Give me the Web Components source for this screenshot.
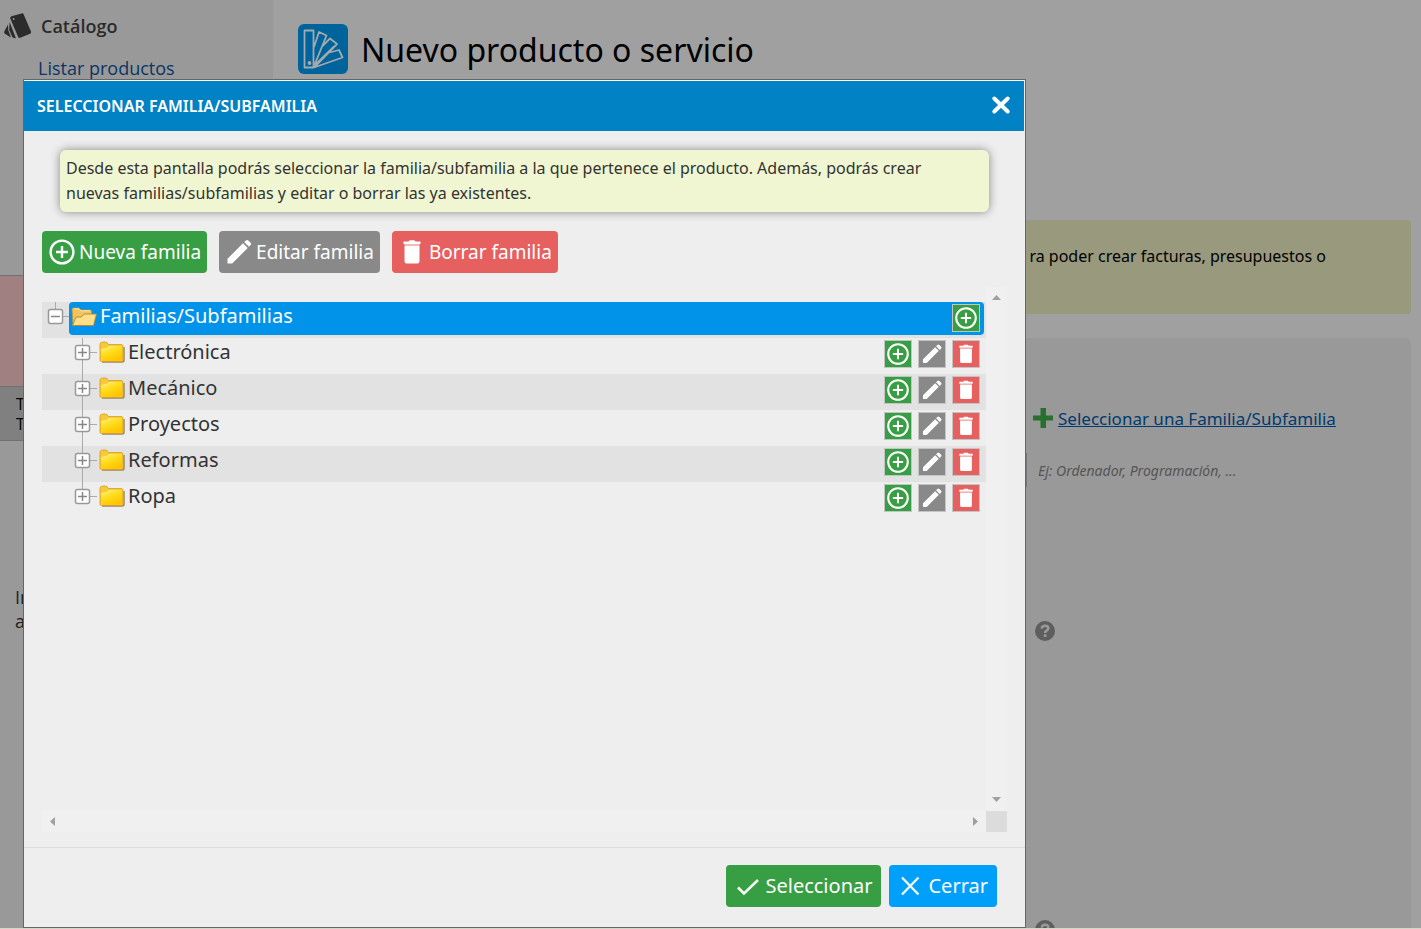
<!DOCTYPE html>
<html lang="es">
<head>
<meta charset="utf-8">
<title>Nuevo producto o servicio</title>
<style>
html,body{margin:0;height:100%}
body{font-family:"Noto Sans","Open Sans",sans-serif;color:#222;overflow:hidden;background:#a0a0a0}
</style>
</head>
<body>
<app-shell>
  <side-nav slot="nav"></side-nav>
  <product-page slot="main"></product-page>
  <family-dialog slot="dialog" heading="SELECCIONAR FAMILIA/SUBFAMILIA">
    <info-tip>Desde esta pantalla podrás seleccionar la familia/subfamilia a la que pertenece el producto. Además, podrás crear nuevas familias/subfamilias y editar o borrar las ya existentes.</info-tip>
    <tool-row>
      <action-button icon="add" color="#389e43">Nueva familia</action-button>
      <action-button icon="edit" color="#898989">Editar familia</action-button>
      <action-button icon="trash" color="#e66060">Borrar familia</action-button>
    </tool-row>
    <scroll-box>
      <tree-item label="Familias/Subfamilias" root></tree-item>
      <tree-item label="Electrónica"></tree-item>
      <tree-item label="Mecánico" shade></tree-item>
      <tree-item label="Proyectos"></tree-item>
      <tree-item label="Reformas" shade></tree-item>
      <tree-item label="Ropa" last></tree-item>
    </scroll-box>
    <action-button slot="footer" large icon="check" color="#389e43">Seleccionar</action-button>
    <action-button slot="footer" large icon="cross" color="#009ff9">Cerrar</action-button>
  </family-dialog>
</app-shell>
<script>
const ICONS={
add:'<svg viewBox="0 0 28 28"><g fill="none" stroke="#fff" stroke-width="2.4"><circle cx="14" cy="14" r="11.4"/><path d="M14 8v12M8 14h12"/></g></svg>',
edit:'<svg viewBox="0 0 28 28"><path fill="#fff" d="M2.5 20.8 18 5.3l4.700 4.700L7.200 25.500H2.500zM19.200 4.100l1.700-1.700q1.200-1 2.400 0l2.300 2.300q1 1.200 0 2.400l-1.700 1.700z"/></svg>',
trash:'<svg viewBox="0 0 28 28"><path fill="#fff" d="M6.500 7.500h15v16q0 2-2 2h-11q-2 0-2-2zM5.500 3.500h5l1.200-1.300h4.600l1.200 1.300h5v2.500h-17z"/><path fill="#f5bcbc" d="M6.500 6h15v1.500h-15z"/></svg>',
check:'<svg viewBox="0 0 28 28"><path fill="none" stroke="#f4faf4" stroke-width="2.600" d="M4 15.500l6 6L24 8"/></svg>',
cross:'<svg viewBox="0 0 28 28"><path fill="none" stroke="#eef8ff" stroke-width="2.500" d="M5 5.500l16.500 17M21.500 5.500l-16.500 17"/></svg>',
close:'<svg viewBox="0 0 20 20"><path fill="none" stroke="#fff" stroke-width="4" stroke-linecap="round" d="M3.300 3.500l13.400 13M16.700 3.500l-13.400 13"/></svg>',
plus:'<svg viewBox="0 0 20 20"><path fill="#28702e" d="M7.500 0h5.500v7.500H20v5h-7V20H7.500v-7.500H0v-5h7.500z"/></svg>',
help:'<svg viewBox="0 0 20 20"><circle cx="10" cy="10" r="10" fill="#5e5e5e"/><path fill="none" stroke="#999" stroke-width="2.600" d="M6.700 7.600q.3-2.900 3.400-2.900 3.200 0 3.200 2.500 0 1.500-1.700 2.500-1.500.9-1.500 2.300"/><path fill="#999" d="M8.700 13.300h2.800v2.600H8.700z"/></svg>',
catalog:'<svg viewBox="0 0 28 26"><g fill="#2b2b2b"><path d="M6.300 5.500q-.4-1.600 1.200-2.300L17.500.4q1.600-.5 2.200 1l7.300 17.200q.5 1.500-.9 2.100l-9.800 4.100q-1.500.5-2.100-.9z"/><path d="M5.600 9l6.300 16.200-1.600-.1q-1.500-.2-2.200-1.700L5.200 17zM4 11.500l.3 5.700 2.700 7.300-5.700-3.400Q-.4 20 .4 18.200z"/></g><circle cx="9.600" cy="6" r=".9" fill="#999"/></svg>',
swatch:'<svg viewBox="0 0 50 50"><rect width="50" height="50" rx="6" fill="#00649c"/><g fill="none" stroke="#a3a9ad" stroke-width="1.800" stroke-linejoin="round"><path d="M6.500 6.500h9v37h-9zM16 23L21 8l7.500 3.500L16.500 41M24 22.500l8-8 7 5.500L16.500 43M31.500 28.500l9.500-2.500 3.500 7.500L16 43.500M36 22.500L17 41"/><circle cx="11.500" cy="39" r="1"/></g></svg>',
folder:'<svg viewBox="0 0 26 24"><defs><linearGradient id="f" x2=".6" y2="1"><stop stop-color="#fff3a0"/><stop offset=".45" stop-color="#ffdf20"/><stop offset="1" stop-color="#ffc400"/></linearGradient></defs><path d="M3 21h20.500q1.500 0 1.500-1.500V6" fill="none" stroke="#9a8a60" stroke-width="1.500"/><path d="M1 19V3.500q0-2 1.500-2.200Q6 .5 8 1.500L9.500 3.500H22q2 0 2 2V19q0 1.500-1.500 1.500H2.500Q1 20.500 1 19z" fill="#f6c83a" stroke="#d99a14" stroke-width=".8"/><path d="M2 19V9q0-1 1-1.300L8 6.500 10 5h13v14.600H2.800z" fill="url(#f)"/></svg>',
open:'<svg viewBox="0 0 26 24"><path d="M2 20L1 4q0-1 1-1h6l2 2h9.500q1 0 1 1v14z" fill="#f2c45c" stroke="#c48e30" stroke-width=".8"/><path d="M1.500 20.500L5 12h5.500l2.500-3h12.500l-3 11.500z" fill="#ffdf8c" stroke="#b9852e" stroke-width=".9"/><path d="M3 3.800h5l2 2h9" fill="none" stroke="#ffe9ae"/></svg>',
up:'<svg viewBox="0 0 21 21"><path d="M6 13h9l-4.500-5z" fill="#a0a0a0"/></svg>',
down:'<svg viewBox="0 0 21 21"><path d="M6 7h9l-4.500 5z" fill="#a0a0a0"/></svg>',
left:'<svg viewBox="0 0 21 21"><path d="M13 6v9l-5-4.500z" fill="#a0a0a0"/></svg>',
right:'<svg viewBox="0 0 21 21"><path d="M8 6v9l5-4.500z" fill="#a0a0a0"/></svg>'
};
function define(tag,render){
  customElements.define(tag,class extends HTMLElement{
    connectedCallback(){
      if(this.shadowRoot)return;
      this.attachShadow({mode:'open'}).innerHTML=render(this);
    }
  });
}
const RESET='*{box-sizing:border-box}button{font:inherit;color:inherit;border:0;padding:0;margin:0;background:none;cursor:pointer}';

define('ui-icon',el=>`<style>:host{display:block;flex:none}svg{display:block;width:100%;height:100%}</style>${ICONS[el.getAttribute('name')]}`);

define('app-shell',()=>`<style>${RESET}
:host{display:grid;grid-template-columns:273px 1fr;height:100vh;overflow:hidden}
.overlay{position:fixed;inset:0;display:flex;padding:79px 0 0 23px;pointer-events:none;border-bottom:1px solid #d5d6c8}
::slotted([slot=dialog]){pointer-events:auto}
</style><slot name="nav"></slot><slot name="main"></slot><div class="overlay"><slot name="dialog"></slot></div>`);

define('side-nav',()=>`<style>${RESET}
:host{display:block;background:#999;color:#222;font-family:"Open Sans",sans-serif}
h2{display:flex;align-items:center;gap:9px;margin:0;padding:13px 0 0 4px;font-size:18px;line-height:26px;font-weight:600;color:#2b2b2b}
ui-icon{width:28px;height:26px}
a{display:block;margin:16px 0 0 38px;font-size:18px;line-height:26px;color:#0b3564;text-decoration:none}
.alert{height:112px;margin-top:194px;border:1px solid #707070;border-width:1px 0;background:#a08080}
.totals{padding:7px 16px;height:54px;border-bottom:1px solid #707070;background:#808080;font-size:16px;line-height:20px;color:#000}
.legal{padding:144px 15px 0;font-size:18px;line-height:24px}
</style>
<nav><h2><ui-icon name="catalog"></ui-icon>Catálogo</h2><a href="#listar">Listar productos</a></nav>
<div class="alert"></div>
<div class="totals"><div>T</div><div>T</div></div>
<div class="legal"><div>In</div><div>a</div></div>`);

define('product-page',()=>`<style>${RESET}
:host{display:block;padding:24px 10px 0 25px;background:#a0a0a0}
h1{display:flex;align-items:flex-start;gap:13px;margin:0;font-size:32px;line-height:52px;height:50px;font-weight:400;color:#000}
h1 ui-icon{width:50px;height:50px}
.notice{height:94px;margin-top:146px;padding:24px 85px 0 0;border-radius:4px;background:#99997d;color:#000;font-size:16px;line-height:24px;text-align:right}
.panel{display:grid;grid-template-columns:729px 1fr;align-content:start;margin-top:24px;padding-top:62px;height:640px;border-radius:6px;background:#999}
.panel>*{grid-column:2}
.pick{display:flex;align-items:center;gap:5px;padding-left:6px;height:36px;font-size:17px}
.pick ui-icon,.help ui-icon{width:20px;height:20px}
a{color:#003a70}
.panel>.name{grid-column:1/-1;display:grid;grid-template-columns:729px 1fr;align-items:center;margin-top:17px}
input{height:34px;border:1px solid #777;background:#999;font:inherit;min-width:0}
label{padding-left:11px;font-size:14px;font-style:italic;color:#555}
.help{padding-left:8px;margin-top:134px}
.help+.help{margin-top:279px}
.help button{display:block}
</style>
<h1><ui-icon name="swatch"></ui-icon><span>Nuevo producto o servicio</span></h1>
<div class="notice">ra poder crear facturas, presupuestos o</div>
<section class="panel">
<div class="pick"><ui-icon name="plus"></ui-icon><a href="#familia">Seleccionar una Familia/Subfamilia</a></div>
<div class="name"><input id="n" type="text"><label for="n">Ej: Ordenador, Programación, ...</label></div>
<div class="help"><button aria-label="Ayuda"><ui-icon name="help"></ui-icon></button></div>
<div class="help"><button aria-label="Ayuda"><ui-icon name="help"></ui-icon></button></div>
</section>`);

define('family-dialog',el=>`<style>${RESET}
:host{display:flex;flex-direction:column;box-sizing:border-box;width:100%;max-width:1003px;border:1px solid #666;background:#eee}
header{display:flex;align-items:center;justify-content:space-between;height:51px;margin-right:1px;padding:0 13px;border-top:1px solid #fff;background:#0082c4;color:#fff}
h2{margin:0;font-size:16px;font-weight:600}
header ui-icon{width:20px;height:20px}
header button{padding-bottom:2px}
main{flex:1;display:flex;flex-direction:column;min-height:0;padding:19px 18px 15px 18px}
footer{display:flex;justify-content:flex-end;gap:8px;padding:17px 28px 20px;border-top:1px solid #ddd}
</style>
<header><h2>${el.getAttribute('heading')}</h2><button aria-label="Cerrar ventana"><ui-icon name="close"></ui-icon></button></header>
<main><slot></slot></main>
<footer><slot name="footer"></slot></footer>`);

define('info-tip',()=>`<style>
:host{display:block;margin:0 18px;padding:6px 24px 6px 6px;border-radius:6px;background:#f0f6d1;box-shadow:0 0 10px #888;font-size:16px;line-height:25px;color:#333}
</style><slot></slot>`);

define('tool-row',()=>`<style>:host{display:flex;gap:12px;margin-top:19px}</style><slot></slot>`);

define('action-button',el=>{
  const large=el.hasAttribute('large');
  return `<style>${RESET}
:host{display:block}
button{display:flex;align-items:center;gap:3px;height:42px;padding:0 ${large?9:6}px 0 ${large?8:6}px;border-radius:4px;background:${el.getAttribute('color')};color:#fff;font-size:${large?20:19}px;line-height:24px;white-space:nowrap}
ui-icon{width:28px;height:28px}
</style><button><ui-icon name="${el.getAttribute('icon')}"></ui-icon><slot></slot></button>`;
});

define('scroll-box',()=>`<style>${RESET}
:host{flex:1;display:grid;grid-template:1fr 21px/1fr 21px;min-height:0;margin-top:14px}
.list{padding-top:15px;min-width:0}
.v,.h{display:flex;justify-content:space-between;background:#f0f0f0}
.v{flex-direction:column}
.corner{background:#dcdcdc}
button,ui-icon{display:block;width:21px;height:21px}
</style>
<div class="list" role="tree"><slot></slot></div>
<div class="v"><button aria-label="Subir"><ui-icon name="up"></ui-icon></button><button aria-label="Bajar"><ui-icon name="down"></ui-icon></button></div>
<div class="h"><button aria-label="Izquierda"><ui-icon name="left"></ui-icon></button><button aria-label="Derecha"><ui-icon name="right"></ui-icon></button></div>
<div class="corner"></div>`);

define('tree-item',el=>{
  const root=el.hasAttribute('root'),last=el.hasAttribute('last');
  const act=(n,c,l)=>`<button class="act ${n}" style="background:${c}" aria-label="${l}"><ui-icon name="${n}"></ui-icon></button>`;
  const joint=root
    ?'<svg width="27" height="36"><path d="M13.500 0v14M20 14.500h7" stroke="#aaa"/><rect x="6.500" y="7.500" width="14" height="14" rx="2" fill="#fff" stroke="#999" stroke-width="1.500"/><path d="M9 14.500h9" stroke="#888" stroke-width="1.500"/></svg>'
    :`<svg width="27" height="36"><path d="M12.500 0v${last?14:36}M20 14.500h7" stroke="#aaa"/><rect x="5.500" y="7.500" width="14" height="14" rx="2" fill="#fff" stroke="#999" stroke-width="1.500"/><path d="M8 14.500h9M12.500 10v9" stroke="#888" stroke-width="1.500"/></svg>`;
  return `<style>${RESET}
:host{display:flex;height:36px;background:${root||el.hasAttribute('shade')?'#e2e2e2':'none'};padding-left:${root?0:28}px;font-size:20px;line-height:28px;color:#333}
svg{display:block;flex:none}
.line{flex:1;display:flex;align-items:flex-start;height:33px;margin-right:${root?2:0}px;padding:0 ${root?4:6}px 0 2px;gap:3px;border-radius:4px;${root?'background:#0093e9;color:#fff':''}}
.folder{width:26px;height:24px;margin-top:3px}
.label{flex:1}
.acts{display:flex;gap:6px;margin-top:2px}
.act{display:grid;place-items:center;width:28px;height:28px;border:1px solid #c4c4c4}
.act ui-icon{width:22px;height:22px}
.act.add ui-icon{width:24px;height:24px}
</style>${joint}<div class="line" role="treeitem"><ui-icon class="folder" name="${root?'open':'folder'}"></ui-icon><span class="label">${el.getAttribute('label')}</span><span class="acts">${act('add','#389e43','Añadir')}${root?'':act('edit','#898989','Editar')+act('trash','#e66060','Borrar')}</span></div>`;
});
</script>
</body>
</html>
